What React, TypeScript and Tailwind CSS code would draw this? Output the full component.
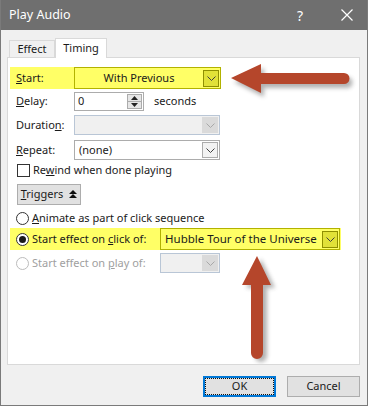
import React from 'react'

const font = { fontFamily: '"Noto Sans", "Open Sans", sans-serif' }

function Chevron({ color = '#404040' }: { color?: string }) {
  return (
    <svg width="9" height="5" viewBox="0 0 9 5" fill="none">
      <path d="M0.5 0.5 L4.5 4.5 L8.5 0.5" stroke={color} strokeWidth="1" />
    </svg>
  )
}

function Radio({ checked, disabled }: { checked?: boolean; disabled?: boolean }) {
  return (
    <span
      className={
        'flex h-[13px] w-[13px] items-center justify-center rounded-full border bg-white ' +
        (disabled ? 'border-[#bcbcbc]' : 'border-[#333333]')
      }
    >
      {checked && <span className="h-[7px] w-[7px] rounded-full bg-[#1a1a1a]" />}
    </span>
  )
}

function LeftArrow() {
  return (
    <svg className="absolute left-[226px] top-[60px]" width="130" height="42" viewBox="0 0 130 42">
      <defs>
        <filter id="sh1" x="-20%" y="-40%" width="140%" height="180%">
          <feGaussianBlur stdDeviation="2" />
        </filter>
      </defs>
      <g transform="translate(3,4)" opacity="0.45" filter="url(#sh1)">
        <path d="M4 18 L34 4 L34 13 L117 13 A5.5 5.5 0 0 1 117 24 L34 24 L34 33 Z" fill="#555" />
      </g>
      <path d="M4 18 L34 4 L34 13 L117 13 A5.5 5.5 0 0 1 117 24 L34 24 L34 33 Z" fill="#b5462b" />
    </svg>
  )
}

function UpArrow() {
  return (
    <svg className="absolute left-[238px] top-[252px]" width="44" height="112" viewBox="0 0 44 112">
      <defs>
        <filter id="sh2" x="-40%" y="-20%" width="180%" height="140%">
          <feGaussianBlur stdDeviation="2" />
        </filter>
      </defs>
      <g transform="translate(4,3)" opacity="0.45" filter="url(#sh2)">
        <path d="M18 4 L32 33 L24 33 L24 101 A6 6 0 0 1 12 101 L12 33 L3 33 Z" fill="#555" />
      </g>
      <path d="M18 4 L32 33 L24 33 L24 101 A6 6 0 0 1 12 101 L12 33 L3 33 Z" fill="#b5462b" />
    </svg>
  )
}

export default function App() {
  return (
    <div
      className="relative flex h-[406px] w-[368px] flex-col border-x border-b border-[#7a7a7a] bg-[#f0f0f0] text-[11px] text-[#1a1a1a]"
      style={font}
    >
      <div className="flex h-[30px] shrink-0 items-center bg-[#6f6f6f] pl-[8px] text-white">
        <span className="flex-1 text-[12.5px]">Play Audio</span>
        <span className="mr-[38px] text-[14px]">?</span>
        <svg className="mr-[14px]" width="12" height="12" viewBox="0 0 12 12">
          <path d="M0.5 0.5 L11.5 11.5 M11.5 0.5 L0.5 11.5" stroke="white" strokeWidth="1.2" />
        </svg>
      </div>

      <div className="flex flex-col px-[6px] pt-[8px]">
        <div className="flex h-[19px] items-end pl-[2px]">
          <div className="flex h-[17px] w-[46px] items-center justify-center border border-b-0 border-[#d9d9d9] bg-[#f0f0f0]">
            Effect
          </div>
          <div className="relative -mb-px flex h-[20px] w-[52px] items-center justify-center border border-b-0 border-[#d9d9d9] bg-white">
            Timing
          </div>
        </div>

        <div className="flex h-[308px] w-[353px] flex-col border border-[#d9d9d9] bg-white pl-[2px] pt-[9px]">
          <div className="flex h-[22px] w-[211px] items-center bg-[#ffff66] pl-[6px]">
            <span className="w-[58px]">
              <span className="underline">S</span>tart:
            </span>
            <div className="flex h-[22px] flex-1 items-center border border-[#b2b200] bg-[#ffff66]">
              <span className="flex-1 text-center">With Previous</span>
              <span className="mr-px flex h-[17px] w-[16px] items-center justify-center border border-[#8f8f00] bg-[#e1e138]">
                <Chevron />
              </span>
            </div>
          </div>

          <div className="mt-[3px] flex h-[19px] items-center pl-[6px]">
            <span className="w-[58px]">
              <span className="underline">D</span>elay:
            </span>
            <div className="flex h-[19px] w-[70px] items-center border border-[#acacac] bg-white pl-[3px]">
              <span className="flex-1">0</span>
              <span className="mr-px flex h-[15px] w-[15px] flex-col border border-[#acacac] bg-[#e6e6e6]">
                <span className="flex flex-1 items-center justify-center border-b border-[#acacac]">
                  <svg width="7" height="4" viewBox="0 0 7 4"><path d="M0 4 L3.5 0 L7 4 Z" fill="#222" /></svg>
                </span>
                <span className="flex flex-1 items-center justify-center">
                  <svg width="7" height="4" viewBox="0 0 7 4"><path d="M0 0 L3.5 4 L7 0 Z" fill="#222" /></svg>
                </span>
              </span>
            </div>
            <span className="ml-[10px]">seconds</span>
          </div>

          <div className="mt-[4px] flex h-[20px] items-center pl-[6px]">
            <span className="w-[58px]">
              Duratio<span className="underline">n</span>:
            </span>
            <div className="flex h-[20px] w-[146px] items-center border border-[#b9c6d6] bg-[#f0f0f0]">
              <span className="flex-1" />
              <span className="mr-px flex h-[16px] w-[16px] items-center justify-center bg-[#dadada]">
                <Chevron color="#a8a8a8" />
              </span>
            </div>
          </div>

          <div className="mt-[5px] flex h-[20px] items-center pl-[6px]">
            <span className="w-[58px]">
              <span className="underline">R</span>epeat:
            </span>
            <div className="flex h-[20px] w-[146px] items-center border border-[#acacac] bg-white pl-[4px]">
              <span className="flex-1">(none)</span>
              <span className="mr-px flex h-[16px] w-[16px] items-center justify-center border border-[#acacac] bg-[#f2f2f2]">
                <Chevron />
              </span>
            </div>
          </div>

          <div className="mt-[3px] flex h-[15px] items-center pl-[7px]">
            <span className="mr-[3px] h-[13px] w-[13px] border border-[#333333] bg-white" />
            <span>
              Re<span className="underline">w</span>ind when done playing
            </span>
          </div>

          <div className="ml-[7px] mt-[6px] flex h-[21px] w-[64px] items-center justify-center gap-[6px] border border-[#adadad] bg-[#e1e1e1]">
            <span>
              <span className="underline">T</span>riggers
            </span>
            <svg width="8" height="9" viewBox="0 0 8 9">
              <path d="M0 4 L4 0 L8 4 Z M0 8 L4 4 L8 8 Z" fill="#111" />
            </svg>
          </div>

          <div className="mt-[5px] flex h-[16px] items-center gap-[3px] pl-[6px]">
            <Radio />
            <span>
              <span className="underline">A</span>nimate as part of click sequence
            </span>
          </div>

          <div className="mt-[2px] flex h-[22px] w-[331px] items-center bg-[#ffff66] pl-[6px]">
            <span className="flex w-[144px] items-center gap-[3px]">
              <Radio checked />
              <span>
                Start effect on <span className="underline">c</span>lick of:
              </span>
            </span>
            <div className="flex h-[22px] w-[180px] items-center border border-[#b2b200] bg-[#ffff66] pl-[4px]">
              <span className="flex-1 whitespace-nowrap text-[11.5px]">Hubble Tour of the Universe</span>
              <span className="mr-px flex h-[17px] w-[16px] items-center justify-center border border-[#8f8f00] bg-[#e1e138]">
                <Chevron />
              </span>
            </div>
          </div>

          <div className="mt-[3px] flex h-[20px] items-center pl-[6px] text-[#a0a0a0]">
            <span className="flex w-[144px] items-center gap-[3px]">
              <Radio disabled />
              <span>
                Start effect on <span className="underline">p</span>lay of:
              </span>
            </span>
            <div className="flex h-[20px] w-[60px] items-center border border-[#b9c6d6] bg-[#f0f0f0]">
              <span className="flex-1" />
              <span className="mr-px flex h-[16px] w-[16px] items-center justify-center bg-[#dadada]">
                <Chevron color="#a8a8a8" />
              </span>
            </div>
          </div>
        </div>
      </div>

      <div className="mt-[11px] flex justify-end gap-[11px] pr-[7px]">
        <div className="flex h-[21px] w-[73px] items-center justify-center border-2 border-[#0078d7] bg-[#e1e1e1]">
          <span className="flex h-[15px] w-[67px] items-center justify-center outline-1 outline-dotted outline-[#111]">
            OK
          </span>
        </div>
        <div className="flex h-[21px] w-[73px] items-center justify-center border border-[#adadad] bg-[#e1e1e1]">
          Cancel
        </div>
      </div>

      <LeftArrow />
      <UpArrow />
    </div>
  )
}
